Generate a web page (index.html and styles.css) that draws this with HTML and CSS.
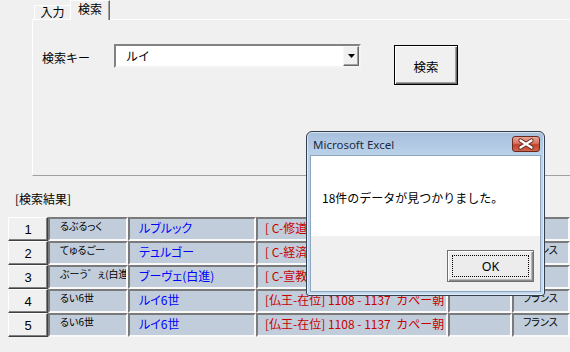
FILE: index.html
```html
<!DOCTYPE html>
<html lang="ja">
<head>
<meta charset="utf-8">
<title>検索</title>
<link rel="stylesheet" href="styles.css">
</head>
<body>
<div class="form">
  <div class="tabs">
    <div class="tab">入力</div>
    <div class="tab active">検索</div>
  </div>
  <div class="panel">
    <div class="search-row">
      <span class="label">検索キー</span>
      <div class="combo">
        <span class="combo-text">ルイ</span>
        <span class="drop"><svg width="7" height="4" viewBox="0 0 7 4"><path d="M0 0H7L3.5 4Z" fill="#000"/></svg></span>
      </div>
      <button class="btn-search">検索</button>
    </div>
  </div>
  <div class="results-label">[検索結果]</div>
  <div class="grid">
    <div class="row">
      <div class="num">1</div>
      <div class="cell c2">るぶるっく</div>
      <div class="cell c3">ルブルック</div>
      <div class="cell c4">[ C-修道士] フランチェスコ会</div>
      <div class="cell c5"></div>
      <div class="cell c6"></div>
    </div>
    <div class="row">
      <div class="num">2</div>
      <div class="cell c2">てゅるごー</div>
      <div class="cell c3">テュルゴー</div>
      <div class="cell c4">[ C-経済学者] 重農主義</div>
      <div class="cell c5"></div>
      <div class="cell c6">フランス</div>
    </div>
    <div class="row">
      <div class="num">3</div>
      <div class="cell c2">ぶーう゛ぇ(白進</div>
      <div class="cell c3">ブーヴェ(白進)</div>
      <div class="cell c4">[ C-宣教師] イエズス会</div>
      <div class="cell c5"></div>
      <div class="cell c6"></div>
    </div>
    <div class="row">
      <div class="num">4</div>
      <div class="cell c2">るい6世</div>
      <div class="cell c3">ルイ6世</div>
      <div class="cell c4">[仏王-在位] 1108 - 1137&nbsp; カペー朝</div>
      <div class="cell c5"></div>
      <div class="cell c6">フランス</div>
    </div>
    <div class="row">
      <div class="num">5</div>
      <div class="cell c2">るい6世</div>
      <div class="cell c3">ルイ6世</div>
      <div class="cell c4">[仏王-在位] 1108 - 1137&nbsp; カペー朝</div>
      <div class="cell c5"></div>
      <div class="cell c6">フランス</div>
    </div>
  </div>
</div>

<div class="dialog">
  <div class="titlebar">
    <span class="title">Microsoft Excel</span>
    <span class="close"><svg width="28" height="16" viewBox="0 0 28 16"><path d="M8.5 4.5L19.5 11.5M19.5 4.5L8.5 11.5" stroke="#5e2216" stroke-width="4.2" stroke-linecap="round"/><path d="M8.5 4.5L19.5 11.5M19.5 4.5L8.5 11.5" stroke="#fff" stroke-width="2.4" stroke-linecap="round"/></svg></span>
  </div>
  <div class="client">
    <div class="msg">18件のデータが見つかりました。</div>
    <div class="footer">
      <button class="btn-ok"><span class="focus">OK</span></button>
    </div>
  </div>
</div>
</body>
</html>
```

FILE: styles.css
```css
html, body {
  margin: 0;
  padding: 0;
}
body {
  width: 570px;
  height: 352px;
  overflow: hidden;
  position: relative;
  background: #f0f0f0;
  font-family: "Noto Sans CJK JP", sans-serif;
  font-size: 12px;
  color: #000;
}

/* tabs */
.tabs {
  display: flex;
  align-items: flex-end;
  height: 19px;
  margin-left: 34px;
  position: relative;
  z-index: 1;
}
.tab {
  box-sizing: border-box;
  height: 14px;
  width: 36px;
  border-top: 1px solid #fff;
  border-left: 1px solid #fff;
  font-size: 12px;
  line-height: 11px;
  text-align: center;
}
.tab.active {
  height: 20px;
  width: 40px;
  margin-bottom: -1px;
  background: #f0f0f0;
  border-right: 1px solid #696969;
  box-shadow: inset -1px 0 #a0a0a0;
  line-height: 16px;
}

/* panel */
.panel {
  box-sizing: border-box;
  margin-left: 32px;
  height: 157px;
  border-top: 1px solid #fff;
  border-left: 1px solid #fff;
  border-bottom: 1px solid #a0a0a0;
}
.search-row {
  display: flex;
  align-items: flex-start;
  padding: 24px 0 0 9px;
}
.label {
  width: 72px;
  line-height: 24px;
  padding-top: 2px;
}
.combo {
  box-sizing: border-box;
  width: 247px;
  height: 24px;
  border: 2px solid;
  border-color: #828282 #f4f4f4 #f4f4f4 #828282;
  background: #fff;
  display: flex;
  justify-content: space-between;
}
.combo-text {
  padding-left: 10px;
  line-height: 20px;
}
.drop {
  box-sizing: border-box;
  width: 16px;
  border: 1px solid;
  border-color: #f8f8f8 #696969 #696969 #f8f8f8;
  box-shadow: inset -1px -1px #a0a0a0;
  background: #f0f0f0;
  display: flex;
  align-items: center;
  justify-content: center;
}
.btn-search {
  margin: 1px 0 0 33px;
  width: 64px;
  height: 40px;
  padding: 3px 0 0;
  border: 1px solid #000;
  background: #f0f0f0;
  box-shadow: inset 1px 1px #fff, inset -1px -1px #696969, inset -2px -2px #a0a0a0;
  font-family: "Noto Sans CJK JP", sans-serif;
  font-size: 12.5px;
  color: #000;
}

/* results */
.results-label {
  margin: 16px 0 0 15px;
  line-height: 14px;
  height: 14px;
}
.grid {
  margin: 11px 0 0 8px;
}
.row {
  display: flex;
  height: 24px;
}
.num {
  box-sizing: border-box;
  width: 40px;
  height: 24px;
  border: 1px solid;
  border-color: #fff #404040 #404040 #fff;
  box-shadow: inset -1px -1px #808080;
  background: #f0f0f0;
  display: flex;
  align-items: center;
  justify-content: center;
  font-family: "Liberation Sans", sans-serif;
  font-size: 13px;
}
.cell {
  box-sizing: border-box;
  height: 24px;
  border: 2px solid;
  border-color: #7a7a7a #fafafa #fafafa #7a7a7a;
  background: #c1cddb;
  overflow: hidden;
  white-space: nowrap;
  font-feature-settings: "palt";
}
.c2 {
  width: 80px;
  padding: 1px 0 0 10px;
  font-size: 10px;
  line-height: 12px;
}
.c3 {
  width: 128px;
  padding: 1px 0 0 9px;
  color: #0000ff;
  font-size: 12px;
  line-height: 15px;
}
.c4 {
  width: 192px;
  padding: 1px 0 0 7px;
  color: #c80000;
  font-size: 12px;
  line-height: 15px;
  font-feature-settings: normal;
}
.c5 {
  width: 64px;
}
.c6 {
  width: 58px;
  padding: 1px 0 0 9px;
  font-size: 10px;
  line-height: 12px;
}

/* dialog */
.dialog {
  position: absolute;
  left: 306px;
  top: 131px;
  width: 239px;
  height: 165px;
  box-sizing: border-box;
  border: 1px solid #34404e;
  border-radius: 6px 6px 3px 3px;
  background: linear-gradient(#a6bfdb, #bad1ea 22px, #c4daf0);
  box-shadow: inset 0 0 0 1px rgba(255, 255, 255, 0.55);
  padding: 0 3px 3px 3px;
  display: flex;
  flex-direction: column;
  z-index: 5;
}
.titlebar {
  height: 23px;
  flex: none;
  display: flex;
  align-items: center;
  justify-content: space-between;
  padding-left: 3px;
}
.title {
  font-family: "Noto Sans", sans-serif;
  font-size: 11.5px;
  color: #1c2c44;
  padding-top: 1px;
}
.close {
  box-sizing: border-box;
  width: 28px;
  height: 16px;
  margin-right: 1px;
  margin-top: 1px;
  border: 1px solid #6a2a20;
  border-radius: 3px;
  background: linear-gradient(#e8a696, #d8725e 45%, #c1432c 55%, #d1654c);
  display: flex;
  align-items: center;
  justify-content: center;
  overflow: hidden;
}
.close svg {
  flex: none;
}
.client {
  flex: 1;
  display: flex;
  flex-direction: column;
  border: 1px solid #8ea6c0;
  background: #f0f0f0;
}
.msg {
  height: 80px;
  box-sizing: border-box;
  background: #fff;
  padding: 34px 0 0 11px;
  line-height: 16px;
  font-size: 12px;
}
.footer {
  flex: 1;
  display: flex;
  justify-content: flex-end;
  align-items: flex-start;
  padding: 14px 6px 0 0;
}
.btn-ok {
  box-sizing: border-box;
  width: 87px;
  height: 32px;
  padding: 4px;
  border: 1px solid #707070;
  background: #ececec;
  box-shadow: inset 1px 1px #fff, inset -1px -1px #8a8a8a, inset -2px -2px #b8b8b8;
  display: flex;
}
.focus {
  flex: 1;
  border: 1px dotted #000;
  display: flex;
  align-items: center;
  justify-content: center;
  font-family: "Noto Sans", sans-serif;
  font-size: 12.5px;
  color: #000;
}
```
